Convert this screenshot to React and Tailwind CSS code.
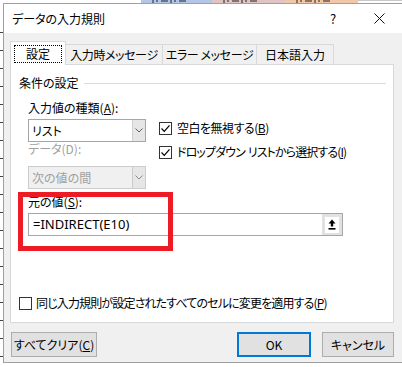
import React from "react";

const jp = "[font-family:'Noto_Sans_CJK_JP','Noto_Sans',sans-serif] [font-feature-settings:'palt']";

function Check({ checked }) {
  return (
    <div className="w-[13px] h-[13px] border border-[#333333] bg-white flex items-center justify-center shrink-0">
      {checked && (
        <svg width="11" height="11" viewBox="0 0 11 11">
          <path d="M1.5 5.5 L4.3 8.3 L9.5 2.3" fill="none" stroke="#000" strokeWidth="1.2" />
        </svg>
      )}
    </div>
  );
}

function Chevron({ color }) {
  return (
    <svg width="8" height="5" viewBox="0 0 8 5">
      <path d="M0.5 0.5 L4 4 L7.5 0.5" fill="none" stroke={color} strokeWidth="1" />
    </svg>
  );
}

function Select({ text, disabled }) {
  return (
    <div
      className={
        "w-[118px] h-[23px] border flex " +
        (disabled ? "border-[#cccccc] bg-[#f0f0f0]" : "border-[#a6a6a6] bg-white")
      }
    >
      <div className={"flex-1 flex items-center pl-[3px] text-[12px] " + (disabled ? "text-[#a0a0a0]" : "text-black")}>
        {text}
      </div>
      <div
        className={
          "w-[13px] flex items-center justify-center border-l " +
          (disabled ? "border-[#cccccc] bg-[#e6e6e6]" : "border-[#cfcfcf] bg-[#e6e6e6]")
        }
      >
        <Chevron color={disabled ? "#8a8a8a" : "#606060"} />
      </div>
    </div>
  );
}

function Fragments() {
  return (
    <svg width="71" height="3" viewBox="0 0 71 3">
      <path d="M12 0 V3 M16 0 V2 M20 1 H27 M30 0 V3 M34 0 V2 M38 1 H45" stroke="#222" strokeWidth="1" />
    </svg>
  );
}

export default function App() {
  const ticks = Array.from({ length: 20 });
  return (
    <div className={"w-[402px] h-[367px] overflow-hidden bg-white flex flex-col text-black " + jp}>
      {/* spreadsheet strip top */}
      <div className="h-[3px] flex overflow-hidden shrink-0">
        <div className="w-[141px] bg-white" />
        <div className="w-[71px] bg-[#b4c6e7] overflow-hidden">
          <Fragments />
        </div>
        <div className="w-[73px] bg-[#e0c3c3] overflow-hidden">
          <Fragments />
        </div>
        <div className="w-[73px] bg-[#f2c7a7] overflow-hidden">
          <Fragments />
        </div>
        <div className="flex-1 bg-white border-t border-[#c8c8c8]" />
      </div>
      <div className="flex h-[364px] shrink-0">
        {/* left spreadsheet sliver */}
        <div className="w-[3px] bg-white flex flex-col pt-[12px] overflow-hidden">
          {ticks.map((_, i) => (
            <div key={i} className="h-[18px] shrink-0 border-b border-[#444444]" />
          ))}
        </div>
        {/* dialog */}
        <div className="flex-1 h-[360px] border-l border-t border-b border-[#a0a0a0] flex flex-col">
          {/* title bar */}
          <div className="h-[29px] bg-white flex items-center">
            <div className="flex-1 pl-[8px] text-[12px] leading-[16px]">データの入力規則</div>
            <div className="w-[46px] flex justify-center text-[13px] leading-[16px]">?</div>
            <div className="w-[46px] flex justify-center">
              <svg width="11" height="11" viewBox="0 0 11 11">
                <path d="M0.5 0.5 L10.5 10.5 M10.5 0.5 L0.5 10.5" stroke="#111" strokeWidth="1" />
              </svg>
            </div>
          </div>
          {/* body */}
          <div className="flex-1 bg-[#f0f0f0] pt-[8px] pl-[6px] pr-[8px] flex flex-col">
            {/* tabs */}
            <div className="h-[24px] flex items-end text-[12px]">
              <div className="relative z-10 w-[56px] h-[24px] bg-white border border-b-0 border-[#d9d9d9] p-[3px]">
                <div className="w-full h-[18px] border border-dotted border-[#000] flex items-center justify-center">
                  設定
                </div>
              </div>
              <div className="w-[97px] h-[21px] border border-l-0 border-[#d9d9d9] flex items-center justify-center tracking-[-0.4px]">
                入力時メッセージ
              </div>
              <div className="w-[94px] h-[21px] border border-l-0 border-[#d9d9d9] flex items-center justify-center tracking-[-0.4px]">
                エラー メッセージ
              </div>
              <div className="w-[77px] h-[21px] border border-l-0 border-[#d9d9d9] flex items-center justify-center">
                日本語入力
              </div>
            </div>
            {/* panel */}
            <div className="relative mt-[-1px] h-[259px] w-[384px] bg-white border border-[#d9d9d9] text-[12px]">
              <div className="pt-[10px] flex items-center h-[26px] pl-[8px] pr-[7px]">
                <span className="leading-[16px]">条件の設定</span>
                <div className="flex-1 ml-[5px] border-t border-[#dcdcdc]" />
              </div>
              <div className="pl-[17px]">
                <div className="mt-[9px] leading-[16px]">
                  入力値の種類(<span className="underline">A</span>):
                </div>
                <div className="mt-[3px] flex gap-[13px]">
                  <div className="flex flex-col">
                    <Select text="リスト" />
                    <div className="leading-[14px] h-[14px] text-[#a0a0a0]">データ(D):</div>
                    <div className="mt-[10px]">
                      <Select text="次の値の間" disabled />
                    </div>
                  </div>
                  <div className="flex flex-col gap-[8px] pt-[1px]">
                    <div className="flex items-center gap-[5px] h-[16px] leading-[16px]">
                      <Check checked />
                      <span className="tracking-[-0.5px]">
                        空白を無視する(<span className="underline">B</span>)
                      </span>
                    </div>
                    <div className="flex items-center gap-[5px] h-[16px] leading-[16px]">
                      <Check checked />
                      <span className="tracking-[-0.9px] whitespace-nowrap">
                        ドロップダウン<span className="ml-[3px]">リストから選択する(</span><span className="underline">I</span>)
                      </span>
                    </div>
                  </div>
                </div>
                <div className="mt-[5px] leading-[16px]">
                  元の値(<span className="underline">S</span>):
                </div>
                <div className="mt-[3px] w-[315px] h-[23px] border border-[#a6a6a6] bg-white flex">
                  <div className="flex-1 flex items-center pl-[4px] text-[13px] [font-family:'Noto_Sans',sans-serif] [font-feature-settings:normal]">
                    =INDIRECT(E10)
                  </div>
                  <div className="w-[20px] bg-[#e1e1e1] flex items-center justify-center">
                    <div className="w-[14px] h-[16px] bg-white flex items-center justify-center">
                      <svg width="8" height="11" viewBox="0 0 8 11">
                        <path d="M4 0.5 L7.5 4.5 L5.2 4.5 L5.2 7.5 L2.8 7.5 L2.8 4.5 L0.5 4.5 Z" fill="#000" />
                        <rect x="0.5" y="9" width="7" height="1.6" fill="#000" />
                      </svg>
                    </div>
                  </div>
                </div>
              </div>
              <div className="mt-[59px] pl-[8px] flex items-center gap-[4px] h-[16px] leading-[16px]">
                <Check />
                <span className="tracking-[-0.85px] whitespace-nowrap">
                  同じ入力規則が設定されたすべてのセルに変更を適用する(<span className="underline">P</span>)
                </span>
              </div>
              {/* red highlight box */}
              <div className="absolute left-[7px] top-[127px] w-[155px] h-[59px] border-[5px] border-[#ed1c24]" />
            </div>
            {/* buttons */}
            <div className="mt-[9px] flex items-center text-[12px]">
              <div className="ml-px w-[86px] h-[25px] bg-[#e1e1e1] border border-[#adadad] flex items-center justify-center">
                すべてクリア(<span className="underline">C</span>)
              </div>
              <div className="flex-1" />
              <div className="w-[74px] h-[25px] bg-[#e1e1e1] border-2 border-[#0078d7] flex items-center justify-center">
                OK
              </div>
              <div className="ml-[11px] w-[72px] h-[25px] bg-[#e1e1e1] border border-[#adadad] flex items-center justify-center">
                キャンセル
              </div>
            </div>
          </div>
        </div>
      </div>
    </div>
  );
}
